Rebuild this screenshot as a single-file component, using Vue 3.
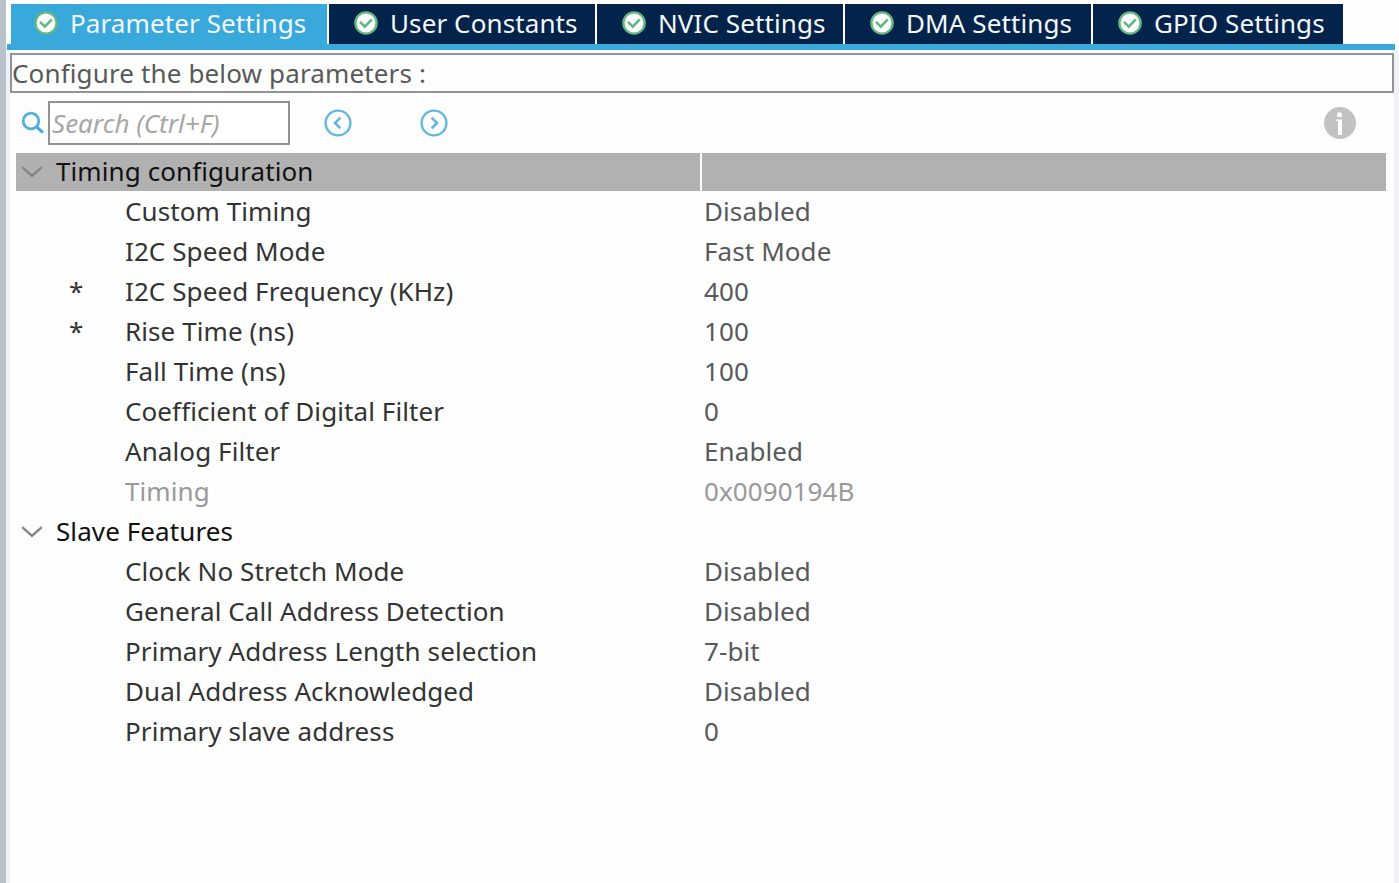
<template>

    <main class="app">
        <div class="edge"></div>

        <div class="content">
            <nav class="tabs">
                <button
                    v-for="(tab, index) in tabs"
                    :key="tab"
                    class="tab"
                    :class="['tab-' + index, {'active': active === index}]"
                    @click="active = index"
                >
                    <svg class="check" viewBox="0 0 24 24">
                        <circle cx="12" cy="12" r="10.6" fill="#ffffff" stroke="#62b881" stroke-width="2.4" />
                        <path d="M6 10.8 L10.8 15.6 L17.8 8.4" fill="none" stroke="#62b881" stroke-width="2.6" />
                    </svg>
                    <span>{{ tab }}</span>
                </button>
            </nav>
            <div class="tab-line"></div>

            <section class="panel">
                <div class="title">Configure the below parameters :</div>

                <div class="toolbar">
                    <svg class="magnifier" viewBox="0 0 24 24">
                        <circle cx="10" cy="10" r="7.8" fill="none" stroke="#52b0dc" stroke-width="2.8" />
                        <path d="M15.4 15.6 L22 21.6" stroke="#46abda" stroke-width="3" />
                    </svg>
                    <input class="search" type="text" placeholder="Search (Ctrl+F)" v-model="search">
                    <button class="nav-btn prev">
                        <svg viewBox="0 0 28 28">
                            <circle cx="14" cy="14" r="12.4" fill="none" stroke="#62b7df" stroke-width="2.4" />
                            <path d="M16.4 8.6 L11 14 L16.4 19.4" fill="none" stroke="#62b7df" stroke-width="2.6" />
                        </svg>
                    </button>
                    <button class="nav-btn next">
                        <svg viewBox="0 0 28 28">
                            <circle cx="14" cy="14" r="12.4" fill="none" stroke="#62b7df" stroke-width="2.4" />
                            <path d="M11.6 8.6 L17 14 L11.6 19.4" fill="none" stroke="#62b7df" stroke-width="2.6" />
                        </svg>
                    </button>
                    <svg class="info" viewBox="0 0 32 32">
                        <circle cx="16" cy="16" r="16" fill="#c2c2c2" />
                        <rect x="13" y="5.5" width="5" height="4.5" rx="1.5" fill="#ffffff" />
                        <path d="M12 12.5 H18 V28 H14 V14 H12 Z" fill="#ffffff" />
                    </svg>
                </div>

                <div class="tree">
                    <template v-for="(group, g) in groups" :key="group.name">
                        <div class="row group" :class="{'selected': g === 0}" @click="group.open = !group.open">
                            <div class="cell name">
                                <svg class="arrow" viewBox="0 0 22 14">
                                    <path d="M1.2 2.2 L11 11 L20.8 2.2" fill="none" stroke="#858585" stroke-width="2.4" />
                                </svg>
                                <span>{{ group.name }}</span>
                            </div>
                            <div class="cell value"></div>
                        </div>
                        <template v-if="group.open">
                            <div v-for="item in group.items" :key="item.label" class="row" :class="{'readonly': item.readonly}">
                                <div class="cell name">
                                    <span class="mark">{{ item.changed ? '*' : '' }}</span>
                                    <span>{{ item.label }}</span>
                                </div>
                                <div class="cell value">{{ item.value }}</div>
                            </div>
                        </template>
                    </template>
                </div>
            </section>
        </div>
    </main>

</template>

<script setup>
import { ref } from "vue"

    const tabs = ['Parameter Settings', 'User Constants', 'NVIC Settings', 'DMA Settings', 'GPIO Settings']
    const active = ref(0)
    const search = ref('')

    const groups = ref([
        {
            name: 'Timing configuration',
            open: true,
            items: [
                { label: 'Custom Timing', value: 'Disabled' },
                { label: 'I2C Speed Mode', value: 'Fast Mode' },
                { label: 'I2C Speed Frequency (KHz)', value: '400', changed: true },
                { label: 'Rise Time (ns)', value: '100', changed: true },
                { label: 'Fall Time (ns)', value: '100' },
                { label: 'Coefficient of Digital Filter', value: '0' },
                { label: 'Analog Filter', value: 'Enabled' },
                { label: 'Timing', value: '0x0090194B', readonly: true }
            ]
        },
        {
            name: 'Slave Features',
            open: true,
            items: [
                { label: 'Clock No Stretch Mode', value: 'Disabled' },
                { label: 'General Call Address Detection', value: 'Disabled' },
                { label: 'Primary Address Length selection', value: '7-bit' },
                { label: 'Dual Address Acknowledged', value: 'Disabled' },
                { label: 'Primary slave address', value: '0' }
            ]
        }
    ])
</script>

<style>
body {
    margin: 0;
    overflow: hidden;
}
</style>

<style scoped>

.app {
    display: flex;
    height: 883px;
    background-color: #fefefe;
    font-family: "Noto Sans", sans-serif;
    font-size: 26px;
    letter-spacing: 0.09px;
    color: #333333;
    white-space: nowrap;
}

.edge {
    width: 6px;
    background-color: #b9c2cb;
}

.content {
    flex: 1;
    min-width: 0;
    display: flex;
    flex-direction: column;
}

.tabs {
    display: flex;
    gap: 2px;
    height: 40px;
    padding: 4px 0 0 5px;
}

.tab {
    display: flex;
    align-items: center;
    height: 40px;
    padding: 0 0 0 25px;
    gap: 12px;
    border: none;
    background-color: #03234b;
    color: #f4f8fc;
    font: inherit;
    letter-spacing: 0.1px;
    line-height: 38px;
}

.tab span {
    height: 40px;
}

.tab.active {
    background-color: #39a9dc;
}

.tab-0 {
    width: 316px;
    padding-left: 23px;
}

.tab-1 {
    width: 266px;
}

.tab-2,
.tab-3 {
    width: 246px;
}

.tab-4 {
    width: 250px;
}

.check {
    width: 24px;
    height: 24px;
    margin-top: -2px;
}

.tab-line {
    height: 6px;
    margin: 0 4px 0 1px;
    background-color: #39a9dc;
}

.panel {
    flex: 1;
    border-left: 4px solid #eff2f7;
    border-right: 5px solid #f0f2f5;
    padding-top: 3px;
}

.title {
    box-sizing: border-box;
    height: 40px;
    border: 2px solid #909498;
    line-height: 36px;
    letter-spacing: 0.14px;
    color: #58595b;
}

.toolbar {
    display: flex;
    align-items: center;
    height: 60px;
    padding: 0 38px 0 11px;
}

.magnifier {
    width: 24px;
    height: 24px;
}

.search {
    box-sizing: border-box;
    width: 242px;
    height: 44px;
    margin-left: 3px;
    padding: 0 2px;
    border: 2px solid #8f9397;
    background-color: #ffffff;
    font: inherit;
    outline: none;
}

.search::placeholder {
    color: #a6a6a6;
    font-style: italic;
    opacity: 1;
}

.nav-btn {
    width: 28px;
    height: 28px;
    padding: 0;
    border: none;
    background: none;
}

.nav-btn svg {
    display: block;
}

.prev {
    margin-left: 34px;
}

.next {
    margin-left: 68px;
}

.info {
    width: 32px;
    height: 32px;
    margin-left: auto;
}

.tree {
    display: grid;
    gap: 2px;
    padding: 0 8px 0 6px;
}

.row {
    display: grid;
    grid-template-columns: 684px 684px;
    gap: 2px;
    height: 38px;
    line-height: 36px;
}

.cell {
    display: flex;
    height: 38px;
}

.value {
    padding-left: 2px;
    box-sizing: border-box;
    color: #58595b;
}

.group {
    color: #111111;
}

.selected .cell {
    background-color: #b1b1b1;
}

.arrow {
    width: 22px;
    height: 14px;
    margin: 12px 13px 0 5px;
}

.mark {
    width: 56px;
    padding-left: 53px;
}

.readonly .cell {
    color: #999999;
}

</style>
